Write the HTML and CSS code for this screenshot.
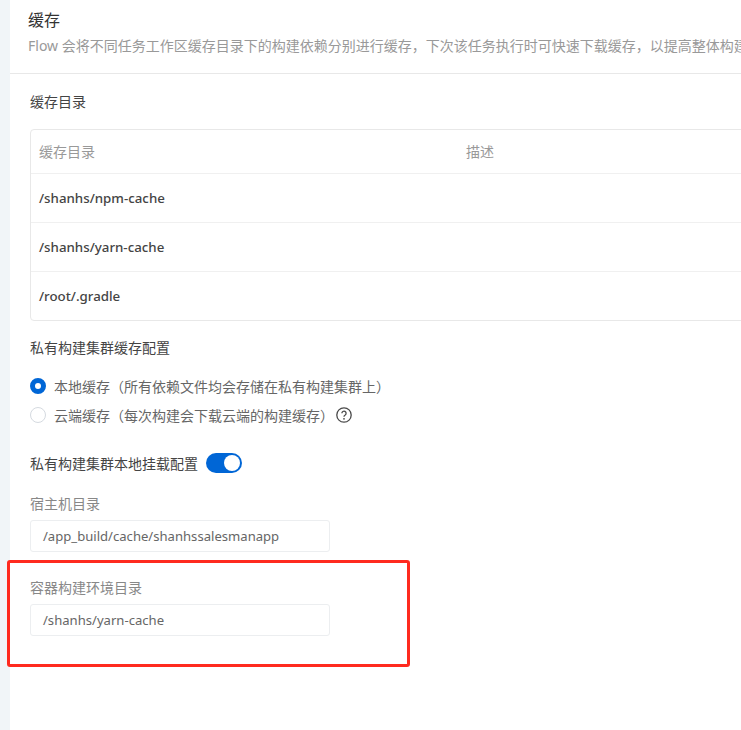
FILE: index.html
```html
<!DOCTYPE html>
<html lang="zh-CN">
<head>
<meta charset="UTF-8">
<title>缓存</title>
<link rel="stylesheet" href="styles.css">
</head>
<body>
<div class="side"></div>
<div class="main">
	<div class="head">
		<div class="head-title">缓存</div>
		<div class="head-desc">Flow 会将不同任务工作区缓存目录下的构建依赖分别进行缓存，下次该任务执行时可快速下载缓存，以提高整体构建速度</div>
	</div>
	<div class="content">
		<div class="sub-title">缓存目录</div>
		<div class="table">
			<div class="row row-head"><div class="col-a">缓存目录</div><div>描述</div></div>
			<div class="row"><div class="col-a">/shanhs/npm-cache</div></div>
			<div class="row"><div class="col-a">/shanhs/yarn-cache</div></div>
			<div class="row"><div class="col-a">/root/.gradle</div></div>
		</div>
		<div class="sub-title cluster-title">私有构建集群缓存配置</div>
		<div class="radio-line">
			<span class="radio radio-on"></span>
			<span>本地缓存（所有依赖文件均会存储在私有构建集群上）</span>
		</div>
		<div class="radio-line">
			<span class="radio"></span>
			<span>云端缓存（每次构建会下载云端的构建缓存）</span>
			<svg class="help" width="16" height="16" viewBox="0 0 16 16">
				<circle cx="8" cy="8" r="7.2" fill="none" stroke="#4a4a4a" stroke-width="1.3"/>
				<path d="M5.9 6.3a2.1 2.1 0 1 1 3.3 1.7c-.8.5-1.2.9-1.2 1.8" fill="none" stroke="#4a4a4a" stroke-width="1.3"/>
				<circle cx="8" cy="11.8" r=".9" fill="#4a4a4a"/>
			</svg>
		</div>
		<div class="mount-line">
			<span>私有构建集群本地挂载配置</span>
			<span class="switch"><span class="knob"></span></span>
		</div>
		<div class="field-label host-label">宿主机目录</div>
		<div class="input">/app_build/cache/shanhssalesmanapp</div>
		<div class="field-label env-label">容器构建环境目录</div>
		<div class="input">/shanhs/yarn-cache</div>
	</div>
</div>
<div class="mark"></div>
</body>
</html>
```
FILE: styles.css
```css
*{
	margin: 0;
	padding: 0;
	box-sizing: border-box;
}
html,body{
	width: 100%;
	height: 100%;
	overflow: hidden;
}
body{
	display: flex;
	background: #fff;
	color: #333;
	font-family: "Noto Sans", "Noto Sans CJK SC", sans-serif;
	font-size: 13px;
	position: relative;
}
.side{
	width: 10px;
	flex: none;
	background: #f1f5f8;
}
.main{
	flex: none;
	width: 1000px;
}
.head{
	height: 74px;
	padding: 10px 18px 0;
	border-bottom: 1px solid #e8e8e8;
}
.head-title{
	font-size: 16px;
	line-height: 20px;
	color: #333;
}
.head-desc{
	margin-top: 6px;
	font-size: 14px;
	line-height: 20px;
	color: #999;
	white-space: nowrap;
}
.content{
	padding: 19px 20px 0;
}
.sub-title{
	font-size: 14px;
	line-height: 20px;
	margin-top: -1px;
	color: #444;
}
.table{
	margin-top: 17px;
	border: 1px solid #e8e8e8;
	border-radius: 4px;
}
.row{
	display: flex;
	align-items: center;
	height: 49px;
	padding-left: 8px;
	border-bottom: 1px solid #f0f0f0;
	font-size: 13.3px;
	font-weight: 500;
	color: #444;
}
.row:last-child{
	height: 48px;
	border-bottom: 0;
}
.row-head{
	height: 44px;
	padding-bottom: 2px;
	font-size: 14px;
	font-weight: 400;
	color: #999;
}
.col-a{
	width: 427px;
}
.cluster-title{
	margin-top: 17px;
}
.radio-line{
	display: flex;
	align-items: center;
	height: 29px;
	font-size: 14px;
	color: #666;
}
.cluster-title + .radio-line{
	margin-top: 13px;
}
.radio{
	width: 16px;
	height: 16px;
	margin-right: 8px;
	border: 1px solid #d5dae0;
	border-radius: 50%;
	background: #fff;
}
.radio-on{
	border: 5px solid #0066d6;
}
.help{
	margin-left: 2px;
}
.mount-line{
	display: flex;
	align-items: center;
	margin-top: 24px;
	height: 20px;
	font-size: 14px;
	color: #444;
}
.switch{
	width: 36px;
	height: 20px;
	margin-left: 8px;
	padding: 2px;
	border-radius: 10px;
	background: #0066d6;
	display: flex;
	justify-content: flex-end;
}
.knob{
	width: 16px;
	height: 16px;
	border-radius: 50%;
	background: #fff;
}
.field-label{
	font-size: 14px;
	line-height: 20px;
	color: #888;
}
.host-label{
	margin-top: 21px;
}
.env-label{
	margin-top: 26px;
}
.input{
	width: 300px;
	height: 32px;
	margin-top: 6px;
	padding-left: 12px;
	border: 1px solid #eceef0;
	border-radius: 3px;
	line-height: 30px;
	font-size: 13.1px;
	color: #666;
}
.mark{
	position: absolute;
	left: 7px;
	top: 560px;
	width: 403px;
	height: 107px;
	border: 3px solid #ff2a1f;
	border-radius: 3px;
}
```
